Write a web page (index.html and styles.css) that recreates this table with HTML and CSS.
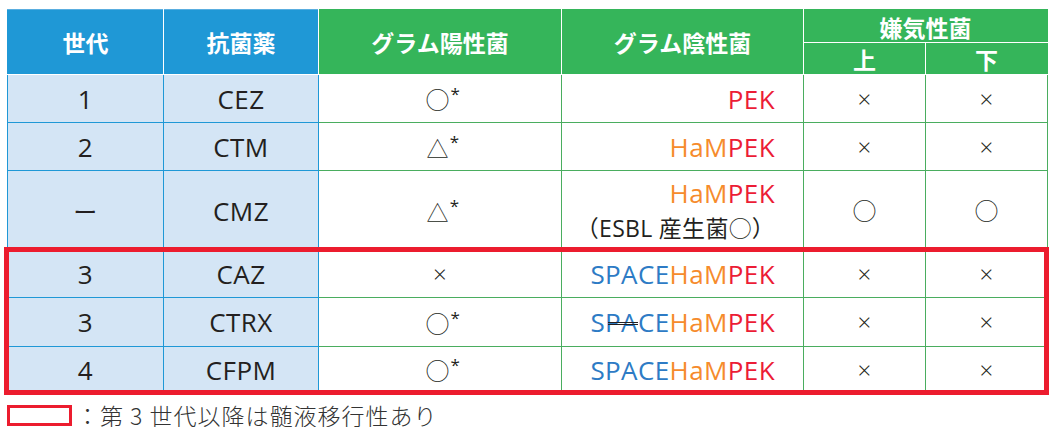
FILE: index.html
```html
<!DOCTYPE html>
<html lang="ja">
<head>
<meta charset="utf-8">
<link rel="stylesheet" href="styles.css">
</head>
<body>
<div class="wrap">
  <table class="tbl">
    <colgroup>
      <col class="c1"><col class="c2"><col class="c3"><col class="c4"><col class="c5"><col class="c6">
    </colgroup>
    <thead>
      <tr class="h1">
        <th rowspan="2" class="hb">世代</th>
        <th rowspan="2" class="hb">抗菌薬</th>
        <th rowspan="2" class="hg">グラム陽性菌</th>
        <th rowspan="2" class="hg">グラム陰性菌</th>
        <th colspan="2" class="hg top">嫌気性菌</th>
      </tr>
      <tr class="h2">
        <th class="hg sub">上</th>
        <th class="hg sub">下</th>
      </tr>
    </thead>
    <tbody>
      <tr class="r1">
        <td class="b">1</td><td class="b">CEZ</td>
        <td class="g pos"><span class="sym">○</span><span class="ast">*</span></td>
        <td class="g neg"><span class="red">PEK</span></td>
        <td class="g x">×</td><td class="g x">×</td>
      </tr>
      <tr class="r2">
        <td class="b">2</td><td class="b">CTM</td>
        <td class="g pos"><span class="sym tri">△</span><span class="ast">*</span></td>
        <td class="g neg"><span class="org">HaM</span><span class="red">PEK</span></td>
        <td class="g x">×</td><td class="g x">×</td>
      </tr>
      <tr class="r3">
        <td class="b"><span class="dash">ー</span></td><td class="b">CMZ</td>
        <td class="g pos"><span class="sym tri">△</span><span class="ast">*</span></td>
        <td class="g neg two"><span class="org">HaM</span><span class="red">PEK</span><br><span class="esbl">（ESBL 産生菌<span class="sym">○</span>）</span></td>
        <td class="g x"><span class="sym">○</span></td><td class="g x"><span class="sym">○</span></td>
      </tr>
      <tr class="r4">
        <td class="b">3</td><td class="b">CAZ</td>
        <td class="g x">×</td>
        <td class="g neg"><span class="blu">SPACE</span><span class="org">HaM</span><span class="red">PEK</span></td>
        <td class="g x">×</td><td class="g x">×</td>
      </tr>
      <tr class="r5">
        <td class="b">3</td><td class="b">CTRX</td>
        <td class="g pos"><span class="sym">○</span><span class="ast">*</span></td>
        <td class="g neg"><span class="blu">S<span class="strike">PA</span>CE</span><span class="org">HaM</span><span class="red">PEK</span></td>
        <td class="g x">×</td><td class="g x">×</td>
      </tr>
      <tr class="r6">
        <td class="b">4</td><td class="b">CFPM</td>
        <td class="g pos"><span class="sym">○</span><span class="ast">*</span></td>
        <td class="g neg"><span class="blu">SPACE</span><span class="org">HaM</span><span class="red">PEK</span></td>
        <td class="g x">×</td><td class="g x">×</td>
      </tr>
    </tbody>
  </table>
  <div class="redbox"></div>
</div>
<div class="legend">
  <span class="legend-box"></span>
  <span class="legend-text">：第 3 世代以降は髄液移行性あり</span>
</div>
</body>
</html>
```

FILE: styles.css
```css
html, body {
  margin: 0;
  padding: 0;
  background: #ffffff;
}
body {
  font-family: "Open Sans", "Noto Sans CJK JP", sans-serif;
  color: #231f20;
}
.wrap {
  position: relative;
  margin: 9px 0 0 7px;
  width: 1040px;
}
.tbl {
  border-collapse: collapse;
  table-layout: fixed;
  width: 1040px;
}
.c1 { width: 156px; }
.c2 { width: 155px; }
.c3 { width: 243px; }
.c4 { width: 242px; }
.c5 { width: 122px; }
.c6 { width: 122px; }

th {
  font-family: "Noto Sans CJK JP", sans-serif;
  font-weight: 700;
  font-size: 23px;
  color: #ffffff;
  padding: 0;
  border: 1px solid #ffffff;
  line-height: 1;
}
.hb { background: #1f98d6; border-left-color: #1f98d6; }
.hg { background: #35b55a; }
.h1 th:last-child { border-right-color: #35b55a; }
.h2 th:last-child { border-right-color: #35b55a; }
.h1 th { border-top-color: #35b55a; }
.h1 .hb { border-top-color: #5aaee0; }
.h1 { height: 33px; }
.h2 { height: 32px; }
.top { padding-top: 2px; }
.sub { padding-top: 1px; }

td {
  padding: 0;
  text-align: center;
  font-size: 26px;
  letter-spacing: 0.4px;
  line-height: 1;
}
td.b {
  background: #d4e5f5;
  border: 1px solid #1f98d6;
}
td.g {
  background: #ffffff;
  border: 1px solid #4aad5f;
}
tbody tr td:nth-child(3) { border-left: 1px solid #1f98d6; }
.r1, .r2 { height: 48px; }
.r3 { height: 80px; }
.r4 { height: 47px; }
.r5 { height: 49px; }
.r6 { height: 46px; }

.sym {
  font-family: "Noto Sans CJK JP", sans-serif;
  font-weight: 300;
  font-size: 24px;
  letter-spacing: 0;
}
.tri { font-size: 22px; }
.ast {
  font-family: "Open Sans", sans-serif;
  font-size: 17px;
  vertical-align: 9px;
  margin-left: 1px;
}
.pos { padding-left: 6px; }
.x {
  font-family: "Open Sans", sans-serif;
  font-weight: 300;
  font-size: 24px;
}
.x .sym { font-size: 24px; }
.dash {
  font-family: "Noto Sans CJK JP", sans-serif;
  font-weight: 400;
  font-size: 24px;
}
.neg {
  text-align: right;
  padding-right: 28px;
}
.two { line-height: 34px; }
.esbl { font-size: 23px; letter-spacing: 0.3px; }
.esbl .sym { font-size: 23px; }
.red { color: #ec1c36; }
.org { color: #f68b2c; }
.blu { color: #2d7bc5; }
.strike { position: relative; }
.strike::after {
  content: "";
  position: absolute;
  left: 3px;
  right: 0;
  top: 50%;
  height: 1px;
  border-top: 1px solid #231f20;
  border-bottom: 1px solid #231f20;
}

.redbox {
  position: absolute;
  left: -3px;
  top: 238px;
  width: 1045px;
  height: 148px;
  border: 5px solid #ec1c2e;
  box-sizing: border-box;
  pointer-events: none;
}

.legend {
  display: flex;
  align-items: center;
  margin: 11px 0 0 7px;
}
.legend-box {
  width: 65px;
  height: 21px;
  border: 3px solid #ec1c2e;
  box-sizing: border-box;
}
.legend-text {
  font-family: "Noto Sans CJK JP", sans-serif;
  font-weight: 300;
  font-size: 23px;
  letter-spacing: 1px;
  color: #333333;
  margin-left: 4px;
  line-height: 1;
}
```
